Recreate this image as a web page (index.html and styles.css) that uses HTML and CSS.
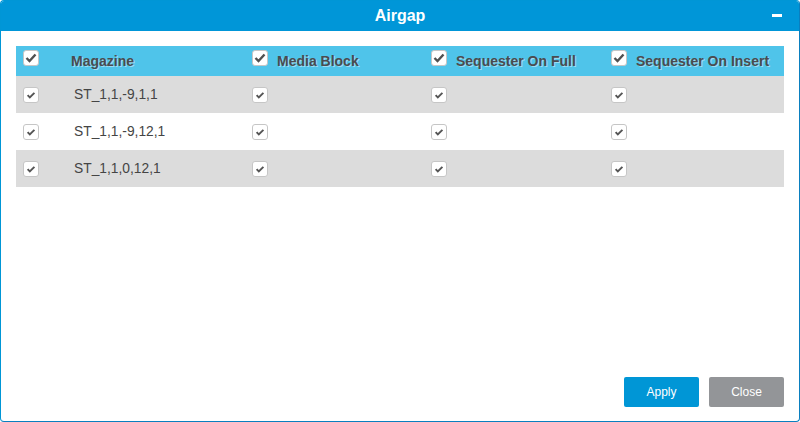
FILE: index.html
```html
<!DOCTYPE html>
<html lang="en">
<head>
  <meta charset="UTF-8" />
  <title>Airgap</title>
  <link rel="stylesheet" href="styles.css">
</head>
<body>
  <div class="dialog">
    <div class="titlebar">
      <span></span>
      <h1>Airgap</h1>
      <span class="minimize"></span>
    </div>

    <div class="content">
      <div class="grid">
        <div class="head"><span class="box big"><svg viewBox="0 0 14 14"><path d="M2.5 7l3 3 6-6.5"/></svg></span></div>
        <div class="head"><span class="label">Magazine</span></div>
        <div class="head"><span class="box big"><svg viewBox="0 0 14 14"><path d="M2.5 7l3 3 6-6.5"/></svg></span><span class="label">Media Block</span></div>
        <div class="head"><span class="box big"><svg viewBox="0 0 14 14"><path d="M2.5 7l3 3 6-6.5"/></svg></span><span class="label">Sequester On Full</span></div>
        <div class="head"><span class="box big"><svg viewBox="0 0 14 14"><path d="M2.5 7l3 3 6-6.5"/></svg></span><span class="label">Sequester On Insert</span></div>

        <div class="cell shade"><span class="box"><svg viewBox="0 0 14 14"><path d="M3.6 7.2l2.2 2.2 4.6-4.6"/></svg></span></div>
        <div class="cell shade name">ST_1,1,-9,1,1</div>
        <div class="cell shade"><span class="box"><svg viewBox="0 0 14 14"><path d="M3.6 7.2l2.2 2.2 4.6-4.6"/></svg></span></div>
        <div class="cell shade"><span class="box"><svg viewBox="0 0 14 14"><path d="M3.6 7.2l2.2 2.2 4.6-4.6"/></svg></span></div>
        <div class="cell shade"><span class="box"><svg viewBox="0 0 14 14"><path d="M3.6 7.2l2.2 2.2 4.6-4.6"/></svg></span></div>

        <div class="cell"><span class="box"><svg viewBox="0 0 14 14"><path d="M3.6 7.2l2.2 2.2 4.6-4.6"/></svg></span></div>
        <div class="cell name">ST_1,1,-9,12,1</div>
        <div class="cell"><span class="box"><svg viewBox="0 0 14 14"><path d="M3.6 7.2l2.2 2.2 4.6-4.6"/></svg></span></div>
        <div class="cell"><span class="box"><svg viewBox="0 0 14 14"><path d="M3.6 7.2l2.2 2.2 4.6-4.6"/></svg></span></div>
        <div class="cell"><span class="box"><svg viewBox="0 0 14 14"><path d="M3.6 7.2l2.2 2.2 4.6-4.6"/></svg></span></div>

        <div class="cell shade"><span class="box"><svg viewBox="0 0 14 14"><path d="M3.6 7.2l2.2 2.2 4.6-4.6"/></svg></span></div>
        <div class="cell shade name">ST_1,1,0,12,1</div>
        <div class="cell shade"><span class="box"><svg viewBox="0 0 14 14"><path d="M3.6 7.2l2.2 2.2 4.6-4.6"/></svg></span></div>
        <div class="cell shade"><span class="box"><svg viewBox="0 0 14 14"><path d="M3.6 7.2l2.2 2.2 4.6-4.6"/></svg></span></div>
        <div class="cell shade"><span class="box"><svg viewBox="0 0 14 14"><path d="M3.6 7.2l2.2 2.2 4.6-4.6"/></svg></span></div>
      </div>
    </div>

    <div class="footer">
      <button class="apply">Apply</button>
      <button class="close">Close</button>
    </div>
  </div>
</body>
</html>
```

FILE: styles.css
```css
body {
  margin: 0;
  font-family: "Liberation Sans", Arial, sans-serif;
}
.dialog {
  box-sizing: border-box;
  width: 800px;
  height: 422px;
  border: 1px solid #0096d6;
  border-bottom-color: #0a7fbf;
  border-right-color: #0a7fbf;
  border-radius: 4px;
  display: flex;
  flex-direction: column;
  background: #fff;
  overflow: hidden;
}
.titlebar {
  height: 30px;
  background-color: #0096d8;
  display: grid;
  grid-template-columns: 1fr auto 1fr;
  align-items: center;
}
.titlebar h1 {
  margin: 0;
  color: #fff;
  font-size: 16px;
  font-weight: bold;
}
.minimize {
  justify-self: end;
  width: 10px;
  height: 3px;
  margin-right: 17px;
  margin-bottom: 1px;
  background: #fff;
}
.content {
  flex: 1;
  padding: 15px 15px 0 15px;
}
.grid {
  display: grid;
  grid-template-columns: 47px 182px 179px 180px 180px;
}
.head {
  height: 30px;
  background-color: #4fc4ea;
  display: flex;
  align-items: center;
  padding-left: 7px;
}
.head .box {
  align-self: flex-start;
  margin-top: 4px;
}
.label {
  margin-left: 9px;
  font-size: 14px;
  font-weight: bold;
  color: #4b4b4f;
  text-shadow: 1px 1px 0 rgba(255, 255, 255, 0.45);
}
.head .label:only-child {
  margin-left: 1px;
}
.cell {
  height: 37px;
  display: flex;
  align-items: center;
  padding-left: 7px;
  font-size: 13.8px;
  color: #444;
}
.cell.name {
  padding-left: 11px;
}
.shade {
  background-color: #dcdcdc;
}
.box {
  box-sizing: border-box;
  width: 16px;
  height: 16px;
  background: #fff;
  border: 1px solid #c6c6c6;
  border-radius: 3px;
  display: inline-flex;
}
.box svg {
  width: 14px;
  height: 14px;
}
.box path {
  fill: none;
  stroke: #555;
  stroke-width: 1.9;
}
.box.big path {
  stroke: #505050;
  stroke-width: 2.4;
}
.footer {
  display: flex;
  justify-content: flex-end;
  gap: 10px;
  padding: 0 15px 14px 0;
}
button {
  width: 75px;
  height: 30px;
  border: none;
  border-radius: 2px;
  color: #fff;
  font-family: "Liberation Sans", Arial, sans-serif;
  font-size: 12px;
  cursor: pointer;
}
.apply {
  background-color: #0096d6;
}
.close {
  background-color: #939598;
}
```
